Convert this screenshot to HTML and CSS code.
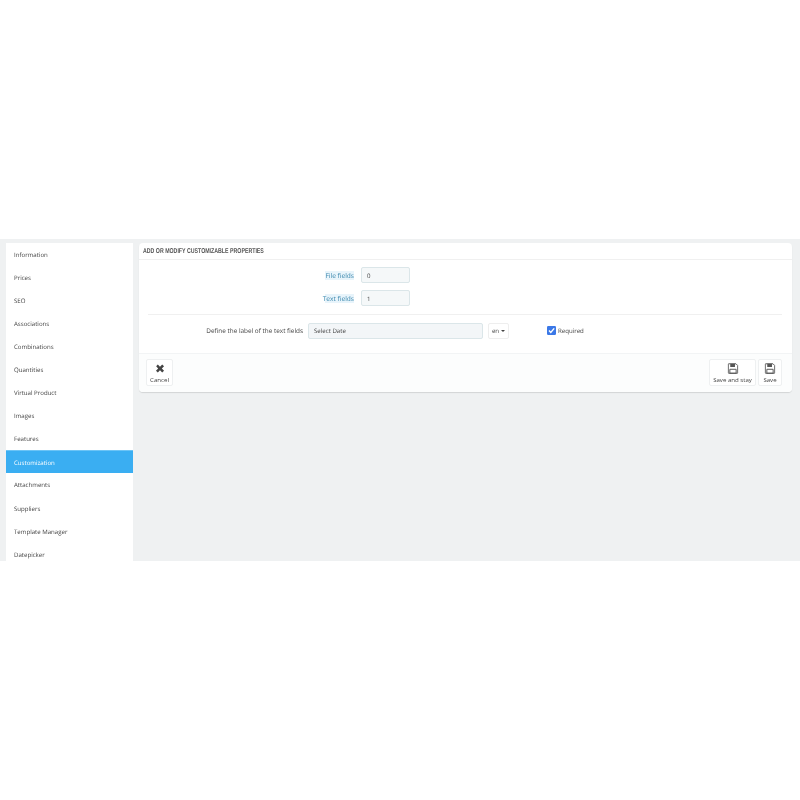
FILE: index.html
```html
<!DOCTYPE html>
<html lang="en">
<head>
<meta charset="utf-8">
<title>Customization</title>
<link rel="stylesheet" href="styles.css">
</head>
<body>
<div class="app">
  <nav class="side">
    <a class="tab">Information</a>
    <a class="tab">Prices</a>
    <a class="tab">SEO</a>
    <a class="tab">Associations</a>
    <a class="tab">Combinations</a>
    <a class="tab">Quantities</a>
    <a class="tab">Virtual Product</a>
    <a class="tab">Images</a>
    <a class="tab">Features</a>
    <a class="tab active">Customization</a>
    <a class="tab">Attachments</a>
    <a class="tab">Suppliers</a>
    <a class="tab">Template Manager</a>
    <a class="tab">Datepicker</a>
  </nav>
  <section class="panel">
    <h2 class="head"><span class="head-text">ADD OR MODIFY CUSTOMIZABLE PROPERTIES</span></h2>
    <div class="counts">
      <div class="row"><span class="hint">File fields</span><span class="input small">0</span></div>
      <div class="row"><span class="hint">Text fields</span><span class="input small">1</span></div>
    </div>
    <div class="define">
      <span class="label">Define the label of the text fields</span>
      <span class="input wide">Select Date</span>
      <span class="lang">en<i class="caret"></i></span>
      <span class="req">
        <svg class="check" viewBox="0 0 9 9" width="9" height="9"><rect width="9" height="9" rx="1.2" fill="#3b78e7"/><path d="M2 4.6l1.8 1.9L7.2 2.4" fill="none" stroke="#fff" stroke-width="1.4"/></svg>
        Required
      </span>
    </div>
    <div class="foot">
      <button class="btn cancel">
        <svg viewBox="0 0 12 12" width="12" height="12"><path d="M1.8 3.6L3.6 1.6 6 4 8.4 1.6l2 2L8 6l2.4 2.4-2 2L6 8l-2.4 2.4-2-2L4 6z" fill="#444"/></svg>
        <span>Cancel</span>
      </button>
      <div class="saves">
        <button class="btn stay">
          <svg viewBox="0 0 14 14" width="14" height="14"><use href="#disk"/></svg>
          <span>Save and stay</span>
        </button>
        <button class="btn save">
          <svg viewBox="0 0 14 14" width="14" height="14"><use href="#disk"/></svg>
          <span>Save</span>
        </button>
      </div>
    </div>
  </section>
</div>
<svg class="defs" width="0" height="0">
  <symbol id="disk" viewBox="0 0 14 14">
    <path d="M1.5 1h9.3L13 3.2v9.3a.6.6 0 0 1-.6.6H1.6a.6.6 0 0 1-.6-.6V1.5a.5.5 0 0 1 .5-.5z" fill="none" stroke="#555" stroke-width="1.2"/>
    <path d="M3.5 1h6v4h-6z" fill="#555"/>
    <path d="M3 8h8v5H3z" fill="none" stroke="#555" stroke-width="1.2"/>
  </symbol>
</svg>
</body>
</html>
```
FILE: styles.css
```css
* { box-sizing: border-box; }
html, body { margin: 0; background: #fff; }
body { padding-top: 239px; height: 800px; font-family: "Open Sans", sans-serif; font-size: 6.1px; color: #444; text-rendering: geometricPrecision; }
.app { height: 322px; background: #eff1f2; overflow: hidden; display: flex; align-items: flex-start; gap: 6px; padding: 4px 8px 0 6px; filter: blur(.3px); }
.side { width: 127px; flex: none; background: #fff; display: flex; flex-direction: column; }
.tab { height: 23.06px; line-height: 24px; padding-left: 8px; color: #444; }
.tab.active { background: #3aaef2; color: #fff; border-top: 1px solid #6cc4f6; line-height: 23px; }
.panel { flex: 1; height: 149px; background: #fff; border-radius: 4px; box-shadow: 0 1px 1px rgba(0,0,0,.12); display: flex; flex-direction: column; }
.head { margin: 0; height: 17px; line-height: 18px; padding-left: 4px; font-size: 7px; font-weight: 700; color: #555; border-bottom: 1px solid #f0f0f0; font-family: "Liberation Sans", sans-serif; }
.head-text { display: inline-block; white-space: nowrap; transform: scaleX(.75); transform-origin: left center; }
.counts { margin: 0 10px 0 9px; padding-top: 7px; height: 55px; border-bottom: 1px solid #f0f0f0; display: flex; flex-direction: column; gap: 7px; }
.row { display: flex; align-items: center; height: 16px; padding-left: 177px; }
.hint { width: 29px; white-space: nowrap; display: flex; justify-content: flex-end; line-height: 10px; padding-top: 1px; color: #3a87ad; background: linear-gradient(#e8f4fb, #e8f4fb) no-repeat right center / 100% 9px; margin-right: 7px; font-size: 6.6px; }
.input { display: flex; align-items: center; height: 16px; padding-left: 5px; background: #f5f8f9; border: 1px solid #dbe6e9; border-radius: 2px; color: #444; }
.input.small { width: 49px; }
.input.wide { width: 175px; background: #f3f6f8; }
.define { display: flex; align-items: center; height: 38px; padding: 0 0 7px 66px; }
.label { width: 98px; text-align: right; white-space: nowrap; margin-right: 5px; font-size: 6.4px; }
.lang { display: flex; align-items: center; justify-content: center; gap: 2px; width: 21px; height: 16px; margin-left: 5px; border: 1px solid #eee; border-radius: 2px; }
.caret { width: 0; height: 0; border: 2px solid transparent; border-top-color: #444; border-bottom: 0; }
.req { display: flex; align-items: center; gap: 2px; margin-left: 38px; }
.foot { flex: 1; display: flex; justify-content: space-between; align-items: flex-start; padding: 5px 10px 0 7px; background: #fcfdfd; border-top: 1px solid #f2f4f5; border-radius: 0 0 4px 4px; }
.saves { display: flex; gap: 2px; }
.btn { height: 27px; padding: 3px 0 0; display: flex; flex-direction: column; align-items: center; background: #fff; border: 1px solid #eef0f1; border-radius: 2px; font: inherit; color: #444; line-height: 10px; gap: 1px; }
.cancel { width: 27px; }
.stay { width: 47px; }
.save { width: 24px; }
.defs { position: absolute; }
```
